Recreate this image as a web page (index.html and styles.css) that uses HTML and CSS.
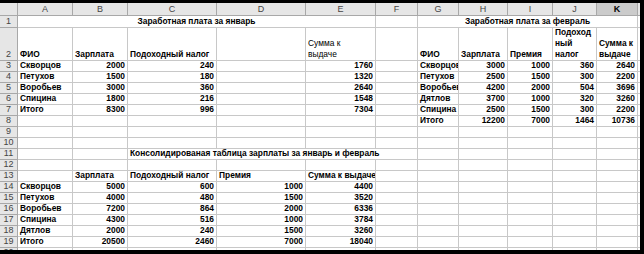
FILE: index.html
```html
<!DOCTYPE html>
<html lang="ru">
<head>
<meta charset="utf-8">
<title>Зарплата</title>
<link rel="stylesheet" href="styles.css">
</head>
<body>
<div class="frame">
<div class="sheet">
  <div class="h corner"></div>
  <div class="h">A</div><div class="h">B</div><div class="h">C</div><div class="h">D</div><div class="h">E</div><div class="h">F</div><div class="h">G</div><div class="h">H</div><div class="h">I</div><div class="h">J</div><div class="h sel">K</div><div class="h"></div>

  <div class="h rh">1</div>
  <div class="c ctr s5">Заработная плата за январь</div><div class="c"></div>
  <div class="c ctr s5">Заработная плата за февраль</div><div class="c"></div>

  <div class="h rh">2</div>
  <div class="c">ФИО</div><div class="c">Зарплата</div><div class="c">Подоходный налог</div><div class="c"></div><div class="c w n narrow">Сумма к выдаче</div><div class="c"></div>
  <div class="c">ФИО</div><div class="c">Зарплата</div><div class="c">Премия</div><div class="c w">Подоход<wbr>ный налог</div><div class="c w">Сумма к выдаче</div><div class="c"></div>

  <div class="h rh">3</div>
  <div class="c">Скворцов</div><div class="c r">2000</div><div class="c r">240</div><div class="c"></div><div class="c r">1760</div><div class="c"></div>
  <div class="c">Скворцов</div><div class="c r">3000</div><div class="c r">1000</div><div class="c r">360</div><div class="c r">2640</div><div class="c"></div>

  <div class="h rh">4</div>
  <div class="c">Петухов</div><div class="c r">1500</div><div class="c r">180</div><div class="c"></div><div class="c r">1320</div><div class="c"></div>
  <div class="c">Петухов</div><div class="c r">2500</div><div class="c r">1500</div><div class="c r">300</div><div class="c r">2200</div><div class="c"></div>

  <div class="h rh">5</div>
  <div class="c">Воробьев</div><div class="c r">3000</div><div class="c r">360</div><div class="c"></div><div class="c r">2640</div><div class="c"></div>
  <div class="c">Воробьев</div><div class="c r">4200</div><div class="c r">2000</div><div class="c r">504</div><div class="c r">3696</div><div class="c"></div>

  <div class="h rh">6</div>
  <div class="c">Спицина</div><div class="c r">1800</div><div class="c r">216</div><div class="c"></div><div class="c r">1548</div><div class="c"></div>
  <div class="c">Дятлов</div><div class="c r">3700</div><div class="c r">1000</div><div class="c r">320</div><div class="c r">3260</div><div class="c"></div>

  <div class="h rh">7</div>
  <div class="c">Итого</div><div class="c r">8300</div><div class="c r">996</div><div class="c"></div><div class="c r">7304</div><div class="c"></div>
  <div class="c">Спицина</div><div class="c r">2500</div><div class="c r">1500</div><div class="c r">300</div><div class="c r">2200</div><div class="c"></div>

  <div class="h rh">8</div>
  <div class="c"></div><div class="c"></div><div class="c"></div><div class="c"></div><div class="c"></div><div class="c"></div>
  <div class="c">Итого</div><div class="c r">12200</div><div class="c r">7000</div><div class="c r">1464</div><div class="c r">10736</div><div class="c"></div>

  <div class="h rh">9</div>
  <div class="c"></div><div class="c"></div><div class="c"></div><div class="c"></div><div class="c"></div><div class="c"></div><div class="c"></div><div class="c"></div><div class="c"></div><div class="c"></div><div class="c"></div><div class="c"></div>

  <div class="h rh">10</div>
  <div class="c"></div><div class="c"></div><div class="c"></div><div class="c"></div><div class="c"></div><div class="c"></div><div class="c"></div><div class="c"></div><div class="c"></div><div class="c"></div><div class="c"></div><div class="c"></div>

  <div class="h rh">11</div>
  <div class="c"></div><div class="c"></div><div class="c s4">Консолидированая таблица зарплаты за январь и февраль</div><div class="c"></div><div class="c"></div><div class="c"></div><div class="c"></div><div class="c"></div><div class="c"></div>

  <div class="h rh">12</div>
  <div class="c"></div><div class="c"></div><div class="c"></div><div class="c"></div><div class="c"></div><div class="c"></div><div class="c"></div><div class="c"></div><div class="c"></div><div class="c"></div><div class="c"></div><div class="c"></div>

  <div class="h rh">13</div>
  <div class="c"></div><div class="c">Зарплата</div><div class="c">Подоходный налог</div><div class="c">Премия</div><div class="c">Сумма к выдаче</div><div class="c"></div><div class="c"></div><div class="c"></div><div class="c"></div><div class="c"></div><div class="c"></div><div class="c"></div>

  <div class="h rh">14</div>
  <div class="c">Скворцов</div><div class="c r">5000</div><div class="c r">600</div><div class="c r">1000</div><div class="c r">4400</div><div class="c"></div><div class="c"></div><div class="c"></div><div class="c"></div><div class="c"></div><div class="c"></div><div class="c"></div>

  <div class="h rh">15</div>
  <div class="c">Петухов</div><div class="c r">4000</div><div class="c r">480</div><div class="c r">1500</div><div class="c r">3520</div><div class="c"></div><div class="c"></div><div class="c"></div><div class="c"></div><div class="c"></div><div class="c"></div><div class="c"></div>

  <div class="h rh">16</div>
  <div class="c">Воробьев</div><div class="c r">7200</div><div class="c r">864</div><div class="c r">2000</div><div class="c r">6336</div><div class="c"></div><div class="c"></div><div class="c"></div><div class="c"></div><div class="c"></div><div class="c"></div><div class="c"></div>

  <div class="h rh">17</div>
  <div class="c">Спицина</div><div class="c r">4300</div><div class="c r">516</div><div class="c r">1000</div><div class="c r">3784</div><div class="c"></div><div class="c"></div><div class="c"></div><div class="c"></div><div class="c"></div><div class="c"></div><div class="c"></div>

  <div class="h rh">18</div>
  <div class="c">Дятлов</div><div class="c r">2000</div><div class="c r">240</div><div class="c r">1500</div><div class="c r">3260</div><div class="c"></div><div class="c"></div><div class="c"></div><div class="c"></div><div class="c"></div><div class="c"></div><div class="c"></div>

  <div class="h rh">19</div>
  <div class="c">Итого</div><div class="c r">20500</div><div class="c r">2460</div><div class="c r">7000</div><div class="c r">18040</div><div class="c"></div><div class="c"></div><div class="c"></div><div class="c"></div><div class="c"></div><div class="c"></div><div class="c"></div>

  <div class="h rh">20</div>
  <div class="c"></div><div class="c"></div><div class="c"></div><div class="c"></div><div class="c"></div><div class="c"></div><div class="c"></div><div class="c"></div><div class="c"></div><div class="c"></div><div class="c"></div><div class="c"></div>
</div>
</div>
</body>
</html>
```

FILE: styles.css
```css
html, body {
  margin: 0;
  padding: 0;
  background: #000;
}

.frame {
  width: 644px;
  height: 254px;
  box-sizing: border-box;
  border-style: solid;
  border-color: #000;
  border-width: 3px 4px 4px 0;
  background: #fff;
  overflow: hidden;
}

.sheet {
  display: grid;
  grid-template-columns: 18px 55px 55px 89px 89px 70px 42px 41px 49px 45px 44px 41px 20px;
  grid-template-rows: 13px 12px 33px repeat(18, 11px);
  font-family: "Liberation Sans", Arial, sans-serif;
  font-size: 8.4px;
  color: #000;
}

.c {
  box-sizing: border-box;
  border-right: 1px solid #c8c8c8;
  border-bottom: 1px solid #c8c8c8;
  overflow: hidden;
  white-space: nowrap;
  padding: 0 2px 0 2px;
  display: flex;
  align-items: flex-end;
  font-weight: bold;
  line-height: 11px;
}

.r {
  justify-content: flex-end;
}

.ctr {
  justify-content: center;
}

.w {
  white-space: normal;
  padding-right: 1px;
}

.narrow {
  padding-right: 24px;
}

.n {
  font-weight: normal;
}

.s5 {
  grid-column: span 5;
}

.s4 {
  grid-column: span 4;
}

.h {
  box-sizing: border-box;
  background: #e6e6e6;
  border-right: 1px solid #a8a8a8;
  border-bottom: 1px solid #a8a8a8;
  display: flex;
  align-items: center;
  justify-content: center;
  color: #444;
  font-size: 9px;
  line-height: 11px;
}

.rh {
  align-items: flex-end;
}

.sel {
  background: #cbcbcb;
  color: #000;
  font-weight: bold;
}
```
